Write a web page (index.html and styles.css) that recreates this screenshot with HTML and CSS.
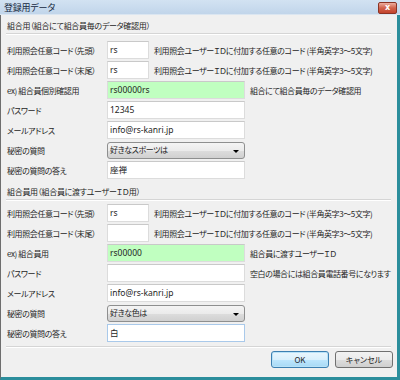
FILE: index.html
```html
<!DOCTYPE html>
<html lang="ja">
<head>
<meta charset="UTF-8">
<title>登録用データ</title>
<link rel="stylesheet" href="styles.css">
</head>
<body>
  <div class="window">
    <div class="titlebar">
      <span class="title">登録用データ</span>
      <span class="close">x</span>
    </div>
    <div class="body">
      <div class="group-title">組合用（組合にて組合員毎のデータ確認用）</div>
      <div class="sep"></div>
      <div class="rows">
        <div class="row">
          <label>利用照会任意コード（先頭）</label>
          <input type="text" class="field short" value="rs">
          <span class="note">利用照会ユーザーＩＤに付加する任意のコード (半角英字3～5文字)</span>
        </div>
        <div class="row">
          <label>利用照会任意コード（末尾）</label>
          <input type="text" class="field short" value="rs">
          <span class="note">利用照会ユーザーＩＤに付加する任意のコード (半角英字3～5文字)</span>
        </div>
        <div class="row">
          <label>ex) 組合員個別確認用</label>
          <input type="text" class="field long sample" value="rs00000rs" readonly>
          <span class="note">組合にて組合員毎のデータ確認用</span>
        </div>
        <div class="row">
          <label>パスワード</label>
          <input type="text" class="field long" value="12345">
        </div>
        <div class="row">
          <label>メールアドレス</label>
          <input type="text" class="field long" value="info@rs-kanri.jp">
        </div>
        <div class="row">
          <label>秘密の質問</label>
          <span class="combo"><span class="combo-text">好きなスポーツは</span></span>
        </div>
        <div class="row">
          <label>秘密の質問の答え</label>
          <input type="text" class="field long" value="座禅">
        </div>
      </div>

      <div class="group-title second">組合員用（組合員に渡すユーザーＩＤ用）</div>
      <div class="sep"></div>
      <div class="rows tight">
        <div class="row">
          <label>利用照会任意コード（先頭）</label>
          <input type="text" class="field short" value="rs">
          <span class="note">利用照会ユーザーＩＤに付加する任意のコード (半角英字3～5文字)</span>
        </div>
        <div class="row">
          <label>利用照会任意コード（末尾）</label>
          <input type="text" class="field short" value="">
          <span class="note">利用照会ユーザーＩＤに付加する任意のコード (半角英字3～5文字)</span>
        </div>
        <div class="row">
          <label>ex) 組合員用</label>
          <input type="text" class="field long sample" value="rs00000" readonly>
          <span class="note">組合員に渡すユーザーＩＤ</span>
        </div>
        <div class="row">
          <label>パスワード</label>
          <input type="text" class="field long" value="">
          <span class="note">空白の場合には組合員電話番号になります</span>
        </div>
        <div class="row">
          <label>メールアドレス</label>
          <input type="text" class="field long" value="info@rs-kanri.jp">
        </div>
        <div class="row">
          <label>秘密の質問</label>
          <span class="combo"><span class="combo-text">好きな色は</span></span>
        </div>
        <div class="row">
          <label>秘密の質問の答え</label>
          <input type="text" class="field long focused" value="白">
        </div>
      </div>

      <div class="sep bottom"></div>
      <div class="buttons">
        <button class="btn default">OK</button>
        <button class="btn">キャンセル</button>
      </div>
    </div>
  </div>
</body>
</html>
```

FILE: styles.css
```css
body {
  margin: 0;
  background-color: #f0f0f0;
  font-family: "Noto Sans CJK JP", sans-serif;
  font-size: 8px;
  color: #1e1e1e;
}
.window {
  width: 400px;
  height: 380px;
  display: flex;
  flex-direction: column;
  overflow: hidden;
}
.titlebar {
  height: 14px;
  flex-shrink: 0;
  display: flex;
  align-items: center;
  justify-content: space-between;
  padding: 0 3px 0 4px;
  background: linear-gradient(#d2e2f2, #c1d5ea);
  border-bottom: 1px solid #dbe6f1;
}
.title {
  font-size: 9px;
  font-feature-settings: "palt";
  letter-spacing: -0.2px;
  color: #15283e;
}
.close {
  width: 17px;
  height: 10px;
  margin-top: 1px;
  border: 1px solid #8b3324;
  border-radius: 2px;
  background: linear-gradient(#ecae9f, #d2634c 50%, #c3432c);
  color: #ffffff;
  font-family: "DejaVu Sans", sans-serif;
  font-weight: bold;
  font-size: 8px;
  line-height: 10px;
  text-align: center;
}
.body {
  flex: 1;
  background-color: #f0f0f0;
  border-left: 1px solid #6e6e6e;
  border-right: 3px solid #2c8e9c;
  border-bottom: 3px solid #2c8e9c;
  padding: 4px 4px 0 6px;
}
.group-title {
  height: 13px;
  line-height: 13px;
  font-feature-settings: "palt";
  letter-spacing: -0.3px;
}
.group-title.second {
  margin-top: 6px;
}
.sep {
  height: 0;
  margin: 1px 2px 0 -1px;
  border-top: 1px solid #d5d5d5;
  border-bottom: 1px solid #ffffff;
}
.rows {
  margin-top: 6px;
  display: flex;
  flex-direction: column;
  gap: 2px;
}
.rows.tight {
  margin-top: 3px;
}
.row {
  height: 18px;
  display: flex;
  align-items: center;
}
.row label {
  width: 100px;
  flex-shrink: 0;
  font-feature-settings: "palt";
  letter-spacing: -0.4px;
}
.note {
  margin-left: 5px;
  font-feature-settings: "palt";
  letter-spacing: -0.4px;
  white-space: nowrap;
}
.field {
  box-sizing: border-box;
  height: 18px;
  margin: 0;
  padding: 0 2px 2px 2px;
  border: 1px solid #dcdcdc;
  border-top-color: #c9c9c9;
  background-color: #ffffff;
  font-family: "Noto Sans", "Noto Sans CJK JP", sans-serif;
  font-size: 8.5px;
  color: #1e1e1e;
  outline: none;
}
.field.short {
  width: 42px;
}
.field.long {
  width: 138px;
}
.field.sample {
  background-color: #c0ffc0;
}
.field.focused {
  border-color: #a9c9ea;
}
.combo {
  box-sizing: border-box;
  position: relative;
  width: 138px;
  height: 17px;
  display: flex;
  align-items: center;
  padding: 0 2px 1px 2px;
  border: 1px solid #8e8f8f;
  border-radius: 3px;
  background: linear-gradient(#f4f4f4, #ebebeb 50%, #dddddd 51%, #d0d0d0);
}
.combo-text {
  font-feature-settings: "palt";
  letter-spacing: -0.4px;
}
.combo::after {
  content: "";
  position: absolute;
  right: 5px;
  top: 7px;
  border-left: 3px solid transparent;
  border-right: 3px solid transparent;
  border-top: 3px solid #000000;
}
.buttons {
  margin-top: 3px;
  display: flex;
  justify-content: flex-end;
  gap: 6px;
}
.btn {
  box-sizing: border-box;
  width: 58px;
  height: 17px;
  padding: 0;
  border: 1px solid #707070;
  border-radius: 3px;
  background: linear-gradient(#f2f2f2, #ebebeb 50%, #dddddd 51%, #cfcfcf);
  font-family: "Noto Sans CJK JP", sans-serif;
  font-size: 8px;
  font-feature-settings: "palt";
  color: #1e1e1e;
}
.btn.default {
  border-color: #3c7fb1;
  background: linear-gradient(#eaf6fd, #d9f0fc 50%, #bee6fd 51%, #a7d9f5);
  box-shadow: inset 0 0 0 1px #b9e2f7;
}
.sep.bottom {
  margin-top: 4px;
}
```
